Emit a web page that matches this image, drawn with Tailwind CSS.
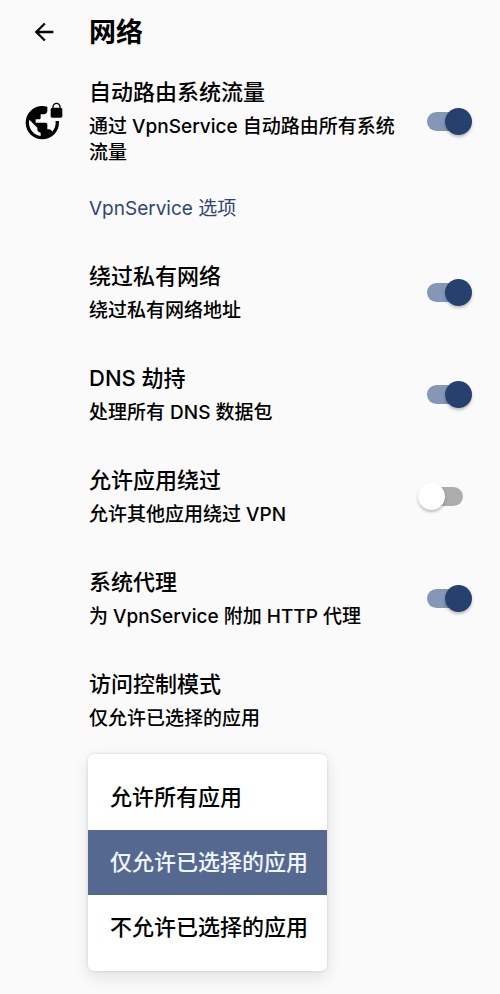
<!DOCTYPE html>
<html lang="zh-CN">

<head>
    <meta charset="UTF-8">
    <meta name="viewport" content="width=device-width, initial-scale=1.0">
    <title>网络</title>
    <script src="https://cdn.jsdelivr.net/npm/@tailwindcss/browser@4"></script>
</head>

<body class="min-h-screen bg-[#fafafa] text-black font-['Inter','Noto_Sans_CJK_SC',sans-serif]">
    <header class="flex items-center h-14 pt-2 pl-[30px]">
        <button type="button" aria-label="返回" class="w-[59px]">
            <svg class="size-7" viewBox="0 0 24 24" fill="currentColor">
                <path d="M20 11H7.83l5.59-5.59L12 4l-8 8 8 8 1.41-1.41L7.83 13H20v-2z" />
            </svg>
        </button>
        <h1 class="pt-0.5 text-[27px] leading-9 font-bold">网络</h1>
    </header>

    <main>
        <label class="flex items-center pt-5 pb-[18px] pl-6 pr-[37px]">
            <svg class="size-10 mr-[25px] shrink-0" viewBox="0 0 24 24" fill="currentColor">
                <path d="M22 4v-.5C22 2.12 20.88 1 19.5 1S17 2.12 17 3.5V4c-.55 0-1 .45-1 1v4c0 .55.45 1 1 1h5c.55 0 1-.45 1-1V5c0-.55-.45-1-1-1zm-.8 0h-3.4v-.5c0-.94.76-1.7 1.7-1.7s1.7.76 1.7 1.7V4zm-2.28 8c.04.33.08.66.08 1 0 2.08-.8 3.97-2.1 5.39-.26-.81-1-1.39-1.9-1.39h-1v-3c0-.55-.45-1-1-1H7v-2h2c.55 0 1-.45 1-1V8h2c1.1 0 2-.9 2-2V3.46c-.95-.3-1.95-.46-3-.46C5.48 3 1 7.48 1 13s4.48 10 10 10 10-4.48 10-10c0-.34-.02-.67-.05-1h-2.03zM10 20.93c-3.95-.49-7-3.85-7-7.93 0-.62.08-1.21.21-1.79L8 16v1c0 1.1.9 2 2 2v1.93z" />
            </svg>
            <span class="flex-1 flex flex-col gap-[6px] mr-6">
                <span class="text-[22px] leading-8 font-medium">自动路由系统流量</span>
                <span class="text-[19px] leading-[26px] font-medium">通过 VpnService 自动路由所有系统流量</span>
            </span>
            <input type="checkbox" role="switch" checked class="appearance-none relative shrink-0 w-9 h-[19px] rounded-full bg-[#adadad] checked:bg-[#8497b6] before:absolute before:-top-1 before:-left-[9px] before:size-[27px] before:rounded-full before:bg-white before:shadow-[0_2px_3px_rgba(0,0,0,0.25)] checked:before:left-[18px] checked:before:bg-[#27416f]">
        </label>

        <h2 class="pl-[89px] pt-3 pb-[18px] text-[19px] leading-[26px] text-[#2f4672]">VpnService 选项</h2>

        <label class="flex items-center pt-5 pb-[18px] pl-[89px] pr-[37px]">
            <span class="flex-1 flex flex-col gap-[6px] mr-6">
                <span class="text-[22px] leading-8 font-medium">绕过私有网络</span>
                <span class="text-[19px] leading-[26px] font-medium">绕过私有网络地址</span>
            </span>
            <input type="checkbox" role="switch" checked class="appearance-none relative shrink-0 w-9 h-[19px] rounded-full bg-[#adadad] checked:bg-[#8497b6] before:absolute before:-top-1 before:-left-[9px] before:size-[27px] before:rounded-full before:bg-white before:shadow-[0_2px_3px_rgba(0,0,0,0.25)] checked:before:left-[18px] checked:before:bg-[#27416f]">
        </label>

        <label class="flex items-center pt-5 pb-[18px] pl-[89px] pr-[37px]">
            <span class="flex-1 flex flex-col gap-[6px] mr-6">
                <span class="text-[22px] leading-8 font-medium">DNS 劫持</span>
                <span class="text-[19px] leading-[26px] font-medium">处理所有 DNS 数据包</span>
            </span>
            <input type="checkbox" role="switch" checked class="appearance-none relative shrink-0 w-9 h-[19px] rounded-full bg-[#adadad] checked:bg-[#8497b6] before:absolute before:-top-1 before:-left-[9px] before:size-[27px] before:rounded-full before:bg-white before:shadow-[0_2px_3px_rgba(0,0,0,0.25)] checked:before:left-[18px] checked:before:bg-[#27416f]">
        </label>

        <label class="flex items-center pt-5 pb-[18px] pl-[89px] pr-[37px]">
            <span class="flex-1 flex flex-col gap-[6px] mr-6">
                <span class="text-[22px] leading-8 font-medium">允许应用绕过</span>
                <span class="text-[19px] leading-[26px] font-medium">允许其他应用绕过 VPN</span>
            </span>
            <input type="checkbox" role="switch" class="appearance-none relative shrink-0 w-9 h-[19px] rounded-full bg-[#adadad] checked:bg-[#8497b6] before:absolute before:-top-1 before:-left-[9px] before:size-[27px] before:rounded-full before:bg-white before:shadow-[0_2px_3px_rgba(0,0,0,0.25)] checked:before:left-[18px] checked:before:bg-[#27416f]">
        </label>

        <label class="flex items-center pt-5 pb-[18px] pl-[89px] pr-[37px]">
            <span class="flex-1 flex flex-col gap-[6px] mr-6">
                <span class="text-[22px] leading-8 font-medium">系统代理</span>
                <span class="text-[19px] leading-[26px] font-medium">为 VpnService 附加 HTTP 代理</span>
            </span>
            <input type="checkbox" role="switch" checked class="appearance-none relative shrink-0 w-9 h-[19px] rounded-full bg-[#adadad] checked:bg-[#8497b6] before:absolute before:-top-1 before:-left-[9px] before:size-[27px] before:rounded-full before:bg-white before:shadow-[0_2px_3px_rgba(0,0,0,0.25)] checked:before:left-[18px] checked:before:bg-[#27416f]">
        </label>

        <div class="relative">
            <button id="modo" type="button" aria-haspopup="listbox" aria-expanded="true" class="w-full flex flex-col gap-[6px] pt-5 pb-[18px] pl-[89px] pr-[37px] text-left">
                <span class="text-[22px] leading-8 font-medium">访问控制模式</span>
                <span id="valor" class="text-[19px] leading-[26px] font-medium">仅允许已选择的应用</span>
            </button>

            <div id="menu" role="listbox" aria-labelledby="modo" class="absolute top-full left-[88px] mt-1 py-[11px] rounded-md bg-white text-[22px] font-medium shadow-[0_6px_16px_rgba(0,0,0,0.1),0_0_3px_rgba(0,0,0,0.14)]">
                <button type="button" role="option" aria-selected="false" class="block w-full h-[65px] pl-[22px] pr-[19px] text-left aria-selected:bg-[#556990] aria-selected:text-[#f0f6ff]">允许所有应用</button>
                <button type="button" role="option" aria-selected="true" class="block w-full h-[65px] pl-[22px] pr-[19px] text-left aria-selected:bg-[#556990] aria-selected:text-[#f0f6ff]">仅允许已选择的应用</button>
                <button type="button" role="option" aria-selected="false" class="block w-full h-[65px] pl-[22px] pr-[19px] text-left aria-selected:bg-[#556990] aria-selected:text-[#f0f6ff]">不允许已选择的应用</button>
            </div>
        </div>
    </main>

    <script>
        const modo = document.getElementById('modo');
        const menu = document.getElementById('menu');
        const opciones = menu.querySelectorAll('[role=option]');

        function mostrarMenu(abierto) {
            menu.hidden = !abierto;
            modo.setAttribute('aria-expanded', abierto);
        }

        modo.addEventListener('click', () => mostrarMenu(menu.hidden));

        opciones.forEach(opcion => {
            opcion.addEventListener('click', () => {
                opciones.forEach(o => o.setAttribute('aria-selected', o === opcion));
                document.getElementById('valor').textContent = opcion.textContent;
                mostrarMenu(false);
            });
        });
    </script>
</body>

</html>
